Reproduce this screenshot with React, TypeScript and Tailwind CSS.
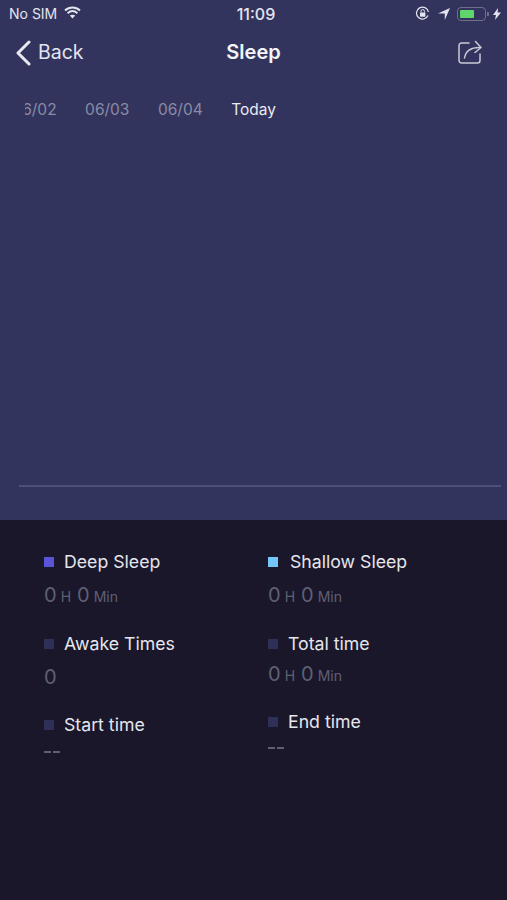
const font = { fontFamily: '"Inter", "Liberation Sans", sans-serif' };

function Duration({ className = "" }: { className?: string }) {
  return (
    <div className={`flex items-baseline text-[#5f6072] ${className}`}>
      <span className="text-[20px] leading-[24px]">0</span>
      <span className="ml-[4px] text-[14px] leading-[24px]">H</span>
      <span className="ml-[6px] text-[20px] leading-[24px]">0</span>
      <span className="ml-[4px] text-[14px] leading-[24px]">Min</span>
    </div>
  );
}

function Label({ color, text, gap }: { color: string; text: string; gap: string }) {
  return (
    <div className={`flex items-center h-[24px] ${gap}`}>
      <span className={`w-[10px] h-[10px] shrink-0 mb-[1px] ${color}`} />
      <span className="text-[17.7px] leading-[24px] text-[#e6e6ec]">{text}</span>
    </div>
  );
}

function Dash() {
  return (
    <div className="flex gap-[2px] h-[2px]">
      <span className="w-[7px] h-[1.5px] bg-[#5f6072]" />
      <span className="w-[7px] h-[1.5px] bg-[#5f6072]" />
    </div>
  );
}

export default function App() {
  return (
    <div style={font} className="w-[507px] h-[900px] flex flex-col overflow-hidden bg-[#1a172b]">
      <div className="h-[520px] bg-[#32345e] flex flex-col shrink-0">
        <div className="h-[27px] flex items-center justify-between pl-[9px] pr-[6px] text-[14px] text-[#e4e4ec]">
          <div className="flex items-center gap-[7px] w-[162px]">
            <span>No SIM</span>
            <svg width="17" height="13" viewBox="0 0 17 13" fill="none" className="mt-[-3px]">
              <path d="M1 4.6C5.4 .6 11.6 .6 16 4.6" stroke="#e4e4ec" strokeWidth="2" />
              <path d="M3.6 7.2c3-2.600 6.800-2.600 9.800 0" stroke="#e4e4ec" strokeWidth="2" />
              <path d="M8.500 12.600 5.800 9.600c1.600-1.200 3.800-1.200 5.400 0z" fill="#e4e4ec" />
            </svg>
          </div>
          <span className="font-medium text-[16px]">11:09</span>
          <div className="flex items-center justify-end w-[160px]">
            <svg width="15" height="15" viewBox="0 0 15 15" fill="none" className="mr-[8px]">
              <path d="M13 9.500A6 6 0 1 1 13.400 6" stroke="#e4e4ec" strokeWidth="1.200" />
              <rect x="5" y="6.500" width="5.400" height="4.200" rx=".6" fill="#e4e4ec" />
              <path d="M6 6.500V5.200a1.700 1.700 0 0 1 3.400 0v1.300" stroke="#e4e4ec" />
            </svg>
            <svg width="12" height="12" viewBox="0 0 12 12" className="mr-[7px]">
              <path d="M12 0 6.800 12V5.400H0z" fill="#e4e4ec" />
            </svg>
            <div className="w-[29px] h-[14px] rounded-[4px] border border-[#6f7088] p-[2px] mr-[1px]">
              <div className="w-[14px] h-full bg-[#5fd66a] rounded-[1px]" />
            </div>
            <span className="w-[2px] h-[4px] bg-[#6f7088] mr-[4px] rounded-r-[1px]" />
            <svg width="8" height="12" viewBox="0 0 8 12">
              <path d="M5 0 0 7h3l-1 5 6-7.500H4.600z" fill="#e4e4ec" />
            </svg>
          </div>
        </div>

        <div className="h-[50px] flex items-center justify-between pl-[15px] pr-[15px]">
          <div className="flex items-center gap-[7px] w-[120px] pt-[2px] text-[#e4e4ec]">
            <svg width="16" height="26" viewBox="0 0 16 26" fill="none">
              <path d="M14 2 3 13l11 11" stroke="#e8e8ef" strokeWidth="3" strokeLinecap="round" strokeLinejoin="round" />
            </svg>
            <span className="text-[19.5px]">Back</span>
          </div>
          <span className="text-[20px] font-semibold text-[#f4f4f7]">Sleep</span>
          <div className="w-[120px] flex justify-end pr-[10px]">
            <svg width="24" height="24" viewBox="0 0 24 24" fill="none" stroke="#c9cad6" strokeWidth="1.5" strokeLinecap="round" strokeLinejoin="round">
              <path d="M11 3H3.500A2.500 2.500 0 0 0 1 5.500v15A2.500 2.500 0 0 0 3.500 23h16a2.500 2.500 0 0 0 2.500-2.500V14" />
              <path d="M6.500 18c1-6 5-10.500 15-10.500" />
              <path d="M17.500 1.500 23 7.500l-6 5" />
            </svg>
          </div>
        </div>

        <div className="ml-[25px] w-[251px] h-[24px] mt-[21px] overflow-hidden flex justify-end items-center gap-[28.5px] text-[15.5px] text-[#8a8ba3]">
          <span className="shrink-0">06/02</span>
          <span className="shrink-0">06/03</span>
          <span className="shrink-0">06/04</span>
          <span className="shrink-0 text-[#e9e9ef]">Today</span>
        </div>

        <div className="flex-1 flex flex-col justify-end ml-[19px] mr-[6px] pb-[33px]">
          <div className="h-[2px] bg-[#4d4f7b]" />
        </div>
      </div>

      <div className="flex pt-[30px] pl-[44px]">
        <div className="w-[224px] shrink-0">
          <Label color="bg-[#5a55d8]" text="Deep Sleep" gap="gap-[10px]" />
          <Duration className="mt-[9px]" />
          <div className="mt-[23px]">
            <Label color="bg-[#2f3058]" text="Awake Times" gap="gap-[10px]" />
          </div>
          <div className="mt-[9px] text-[20px] leading-[24px] text-[#5f6072]">0</div>
          <div className="mt-[24px]">
            <Label color="bg-[#2f3058]" text="Start time" gap="gap-[10px]" />
          </div>
          <div className="mt-[14px]">
            <Dash />
          </div>
        </div>
        <div className="flex-1">
          <Label color="bg-[#72c6f8]" text="Shallow Sleep" gap="gap-[12px]" />
          <Duration className="mt-[9px]" />
          <div className="mt-[23px]">
            <Label color="bg-[#2f3058]" text="Total time" gap="gap-[10px]" />
          </div>
          <Duration className="mt-[6px]" />
          <div className="mt-[22px]">
            <Label color="bg-[#2f3058]" text="End time" gap="gap-[10px]" />
          </div>
          <div className="mt-[13px]">
            <Dash />
          </div>
        </div>
      </div>
    </div>
  );
}
